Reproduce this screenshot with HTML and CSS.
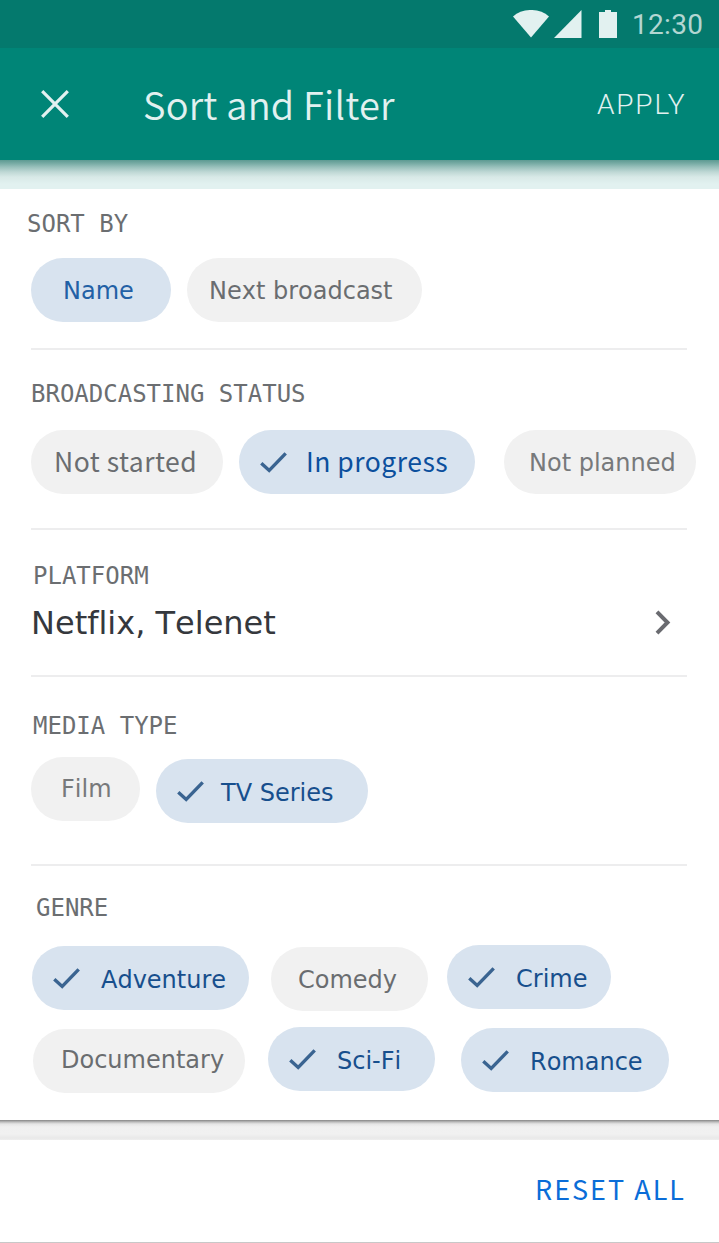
FILE: index.html
```html
<!DOCTYPE html>
<html lang="en">
<head>
<meta charset="utf-8">
<title>Sort and Filter</title>
<link rel="stylesheet" href="styles.css">
</head>
<body>
<svg class="defs" width="0" height="0"><symbol id="check" viewBox="0 0 27 21"><path d="M1.3 11.2 9.2 18.4 25.7 1.4" fill="none" stroke="#3a6491" stroke-width="3.4"/></symbol></svg>
<div class="statusbar">
  <svg class="wifi" width="36" height="28" viewBox="0 0 36 28"><path d="M0 6.5C9-2.2 27-2.2 36 6.5L18 27.5Z" fill="#e2f1f0"/></svg>
  <svg class="signal" width="28" height="28" viewBox="0 0 28 28"><path d="M0 28 27.5 0V28Z" fill="#e2f1f0"/></svg>
  <svg class="battery" width="18" height="28" viewBox="0 0 18 28"><path d="M0 2H6V0H12V2H18V28H0Z" fill="#e2f1f0"/></svg>
  <span class="clock">12:30</span>
</div>
<header class="appbar">
  <svg class="close" width="28" height="28" viewBox="0 0 28 28"><path d="M1.2 1.2 26.8 26.8M26.8 1.2 1.2 26.8" stroke="#e2f1f0" stroke-width="3.2"/></svg>
  <h1 class="title">Sort and Filter</h1>
  <span class="apply">APPLY</span>
</header>
<div class="strip"></div>
<main class="panel">
  <section class="section sort">
    <h2 class="label">SORT BY</h2>
    <div class="chips">
      <div class="chip on name"><span>Name</span></div>
      <div class="chip next"><span>Next broadcast</span></div>
    </div>
  </section>
  <section class="section status">
    <h2 class="label">BROADCASTING STATUS</h2>
    <div class="chips">
      <div class="chip alt started"><span>Not started</span></div>
      <div class="chip on alt progress"><svg class="check"><use href="#check"/></svg><span>In progress</span></div>
      <div class="chip muted planned"><span>Not planned</span></div>
    </div>
  </section>
  <section class="section platform">
    <h2 class="label">PLATFORM</h2>
    <div class="value"><span>Netflix, Telenet</span>
      <svg class="chevron" width="16" height="25" viewBox="0 0 16 25"><path d="M2 1.8 12.5 12.5 2 23.2" fill="none" stroke="#6a6b70" stroke-width="4"/></svg>
    </div>
  </section>
  <section class="section media">
    <h2 class="label">MEDIA TYPE</h2>
    <div class="chips">
      <div class="chip muted film"><span>Film</span></div>
      <div class="chip on tv"><svg class="check"><use href="#check"/></svg><span>TV Series</span></div>
    </div>
  </section>
  <section class="section genre">
    <h2 class="label">GENRE</h2>
    <div class="chips">
      <div class="chip on adventure"><svg class="check"><use href="#check"/></svg><span>Adventure</span></div>
      <div class="chip comedy"><span>Comedy</span></div>
      <div class="chip on crime"><svg class="check"><use href="#check"/></svg><span>Crime</span></div>
    </div>
    <div class="chips second">
      <div class="chip documentary"><span>Documentary</span></div>
      <div class="chip on scifi"><svg class="check"><use href="#check"/></svg><span>Sci-Fi</span></div>
      <div class="chip on romance"><svg class="check"><use href="#check"/></svg><span>Romance</span></div>
    </div>
  </section>
</main>
<div class="gap"></div>
<footer class="footer"><span class="reset">RESET ALL</span></footer>
</body>
</html>
```
FILE: styles.css
```css
* { box-sizing: border-box; }
body { margin: 0; width: 719px; height: 1243px; overflow: hidden; background: #fff; font-family: "DejaVu Sans", sans-serif; }
svg { display: block; flex: none; }
.defs { display: none; }
h1, h2 { margin: 0; font-weight: 400; }
span { white-space: nowrap; }

.statusbar { display: flex; height: 48px; padding: 10px 0 0 513px; background: #04796d; }
.signal { margin-left: 5px; }
.battery { margin-left: 17px; }
.clock { margin: -1px 0 0 15px; font: 400 28px/32px Roboto, sans-serif; letter-spacing: .3px; color: #b3d6d2; }

.appbar { display: flex; height: 112px; padding-left: 41px; background: #008577; color: #e2f1f0; }
.close { margin-top: 42px; }
.title { width: 452px; margin: 26px 0 0 74px; font: 350 38px/60px "Noto Sans CJK JP", sans-serif; letter-spacing: .2px; }
.apply { margin: 40px 0 0 2px; font: 300 28px/33px Roboto, sans-serif; letter-spacing: 1.8px; }

.strip { height: 29px; background: linear-gradient(#5d9a92, #74a9a2 3px, #98c0bb 7px, #bfd8d5 12px, #d8e9e7 17px, #e2f1f0 24px); }

.panel { height: 931px; background: #fff; }
.section { position: relative; padding-left: 31px; }
.section:not(.genre)::after { content: ""; position: absolute; left: 31px; bottom: 0; width: 656px; height: 2px; background: #ededee; }
.label { font: 400 24px/28px "DejaVu Sans Mono", monospace; color: #6b6e71; }
.chips { display: flex; align-items: flex-start; }
.chip { display: flex; align-items: flex-start; flex: none; height: 64px; border-radius: 32px; background: #f1f1f1; color: #6a6d70; font-size: 24px; line-height: 28px; font-kerning: none; }
.chip span { margin-top: 19px; }
.chip.on { background: #d8e3ef; color: #174f8d; }
.chip.on span { margin-top: 20px; }
.chip.muted { color: #77797b; }
.check { width: 27px; height: 21px; margin: 22px 0 0 21px; }
.chip.alt { font: 400 26.5px/38px "Noto Sans CJK JP", sans-serif; letter-spacing: .5px; }
.chip.alt span { margin-top: 12px; }

.sort { height: 161px; padding-top: 21px; }
.sort .label { margin-left: -4px; }
.sort .chips { margin-top: 20px; }
.name { width: 140px; padding-left: 32px; }
.chip.name { color: #2260a5; }
.chip.name span { margin-top: 19px; }
.next { width: 235px; margin-left: 16px; padding-left: 22px; }

.status { height: 180px; padding-top: 30px; }
.status .chips { margin-top: 22px; }
.started { width: 192px; padding-left: 23px; }
.progress { width: 236px; margin-left: 16px; }
.chip.progress { color: #0b4f9d; }
.progress span { margin-left: 19px; }
.planned { width: 192px; margin-left: 29px; padding-left: 25px; }

.platform { height: 147px; padding-top: 32px; }
.platform .label { margin-left: 2px; }
.value { display: flex; margin: 14px 0 0; font-size: 32px; line-height: 38px; color: #35383d; font-kerning: none; font-variant-ligatures: none; }
.value span { width: 624px; }
.chevron { margin: 6px 0 0; }

.media { height: 189px; padding-top: 35px; }
.media .label { margin-left: 2px; }
.media .chips { margin-top: 17px; }
.film { width: 109px; padding-left: 30px; }
.film span { margin-top: 18px; }
.tv { width: 212px; margin: 2px 0 0 16px; }
.tv span { margin-left: 17px; }

.genre { padding-top: 28px; }
.genre .label { margin-left: 5px; }
.genre .chips { margin-top: 23px; }
.genre .second { margin-top: 16px; }
.adventure { width: 217px; margin: 1px 0 0 1px; }
.adventure span { margin-left: 21px; }
.comedy { width: 157px; margin: 2px 0 0 22px; padding-left: 27px; }
.crime { width: 164px; margin-left: 19px; }
.crime span { margin-left: 21px; }
.documentary { width: 212px; margin: 2px 0 0 2px; padding-left: 28px; }
.documentary span { margin-top: 17px; }
.scifi { width: 167px; margin-left: 23px; }
.scifi span { margin-left: 21px; }
.romance { width: 208px; margin: 1px 0 0 26px; }
.romance span { margin-left: 21px; }

.gap { height: 20px; background: linear-gradient(#858585, #bcbcbc 2px, #e5e5e5 4px, #f0f0f0 7px, #f1f1f1 14px, #e9e9e9 18px, #efefef 20px); }
.footer { display: flex; justify-content: flex-end; height: 103px; padding: 29px 33px 0 0; border-bottom: 1px solid #c8c8c8; }
.reset { font: 400 27px/40px "Noto Sans CJK JP", sans-serif; letter-spacing: 2px; color: #0a6dd8; }
```
